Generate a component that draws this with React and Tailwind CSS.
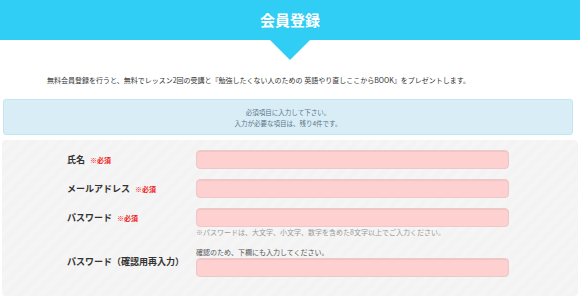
import React from 'react';

const Required = () => (
    <span className="ml-[5px] text-[7px] font-bold text-[#f01818]">※必須</span>
);

const Input = ({ type = 'text' }) => (
    <input
        type={type}
        className="block h-[19px] w-[313px] rounded-[4px] border border-[#ecc8c8] bg-[#ffd0d0] shadow-[inset_0_1px_1px_rgba(0,0,0,0.06)] outline-none"
    />
);

const App = () => {
    return (
        <div className="h-[306px] w-[580px] overflow-hidden bg-white font-['Noto_Sans_CJK_JP',sans-serif] text-[#333]">
            <header className="h-[40px] bg-[#30cdf5] text-center text-[15px] font-bold leading-[39px] text-white">
                会員登録
            </header>
            <div className="flex h-[20px] justify-center">
                <div className="h-0 w-0 border-x-[20px] border-t-[20px] border-x-transparent border-t-[#30cdf5]" />
            </div>

            <p className="mt-[15px] pl-[47px] text-[7px] leading-[10px] text-[#333]">
                無料会員登録を行うと、無料でレッスン2回の受講と『勉強したくない人のための 英語やり直しここからBOOK』をプレゼントします。
            </p>

            <div className="ml-[3px] mr-[7px] mt-[14px] rounded-[3px] border border-[#bfe6f2] bg-[#d9edf7] pb-[5px] pt-[7px] text-center text-[6.5px] leading-[11px] text-[#5a7688]">
                <p>必須項目に入力して下さい。</p>
                <p>入力が必要な項目は、残り4件です。</p>
            </div>

            <form className="mx-[2px] mt-[5px] flex flex-col gap-[10px] rounded-[4px] bg-[repeating-linear-gradient(135deg,#f3f3f3_0px,#f3f3f3_5px,#f5f5f5_5px,#f5f5f5_10px)] pb-[19px] pt-[10px]">
                <div className="flex items-center">
                    <label className="w-[194px] pl-[65px] text-[9px] font-bold">
                        氏名<Required />
                    </label>
                    <Input />
                </div>
                <div className="flex items-center">
                    <label className="w-[194px] pl-[65px] text-[9px] font-bold">
                        メールアドレス<Required />
                    </label>
                    <Input type="email" />
                </div>
                <div className="grid grid-cols-[194px_313px] items-center">
                    <label className="pl-[65px] text-[9px] font-bold">
                        パスワード<Required />
                    </label>
                    <Input type="password" />
                    <p className="col-start-2 text-[7px] leading-[10px] text-[#9a9a9a]">
                        ※パスワードは、大文字、小文字、数字を含めた8文字以上でご入力ください。
                    </p>
                </div>
                <div className="flex items-center">
                    <label className="w-[194px] pl-[65px] text-[9px] font-bold">
                        パスワード（確認用再入力）
                    </label>
                    <div>
                        <p className="mb-[1px] text-[7px] leading-[10px] text-[#555]">
                            確認のため、下欄にも入力してください。
                        </p>
                        <Input type="password" />
                    </div>
                </div>
            </form>
        </div>
    );
};

export default App;
